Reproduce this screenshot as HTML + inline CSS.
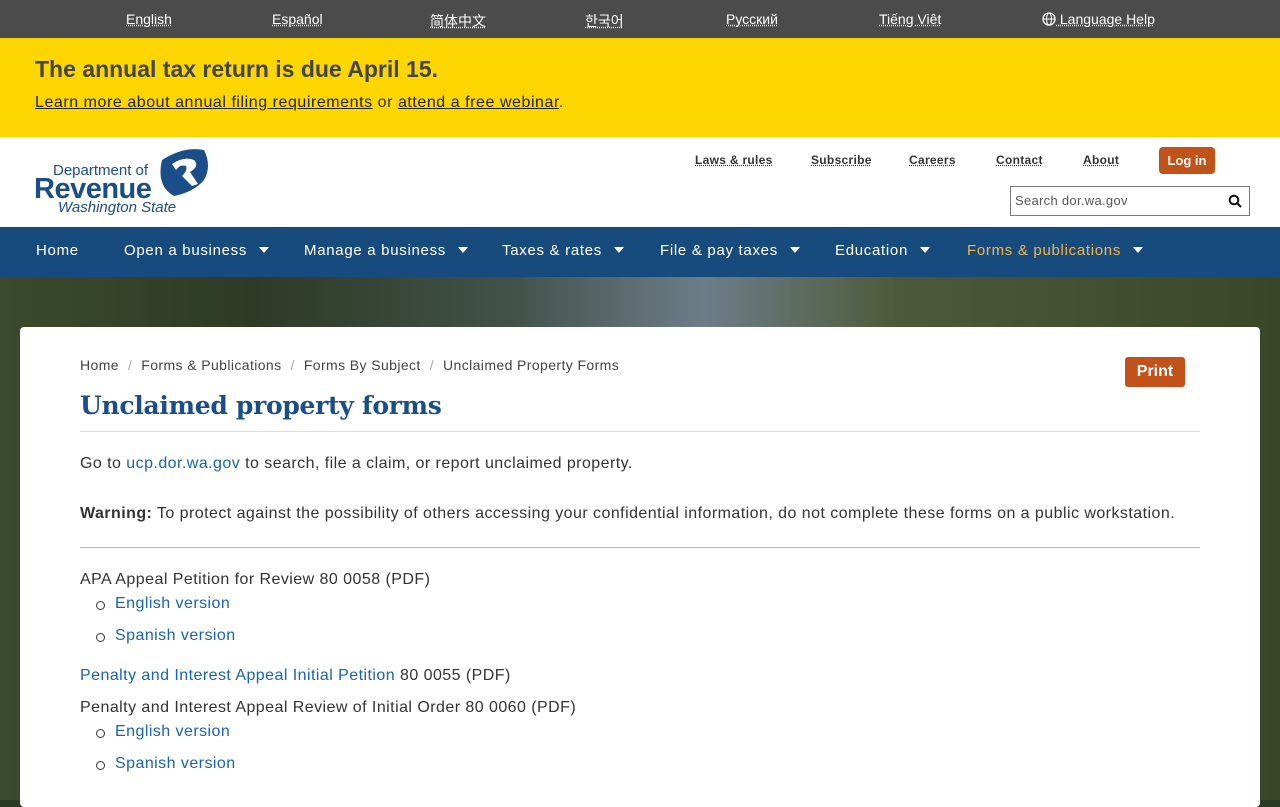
<!DOCTYPE html>
<html><head><meta charset="utf-8"><style>
*{margin:0;padding:0;box-sizing:border-box}
body{width:1280px;height:800px;overflow:hidden;font-family:"Liberation Sans","DejaVu Sans",sans-serif;background:#2d3a22;position:relative}
.lang{height:38px;background:#4b4b4b;color:#fff;font-size:14px;position:relative}
.lang span{position:absolute;top:11px;text-decoration:underline;text-decoration-style:dotted}
.alert{height:99px;background:#fdd600;padding:18px 35px;color:#333}
.alert h2{font-size:23px;font-weight:bold;color:#444}
.alert p{font-size:16px;margin-top:11px;letter-spacing:.55px}
.alert a{color:#222;text-decoration:underline}
.hdr{height:90px;background:#fff;position:relative}
.util{position:absolute;top:16px;font-size:12px;font-weight:bold;color:#333;text-decoration:underline dotted;letter-spacing:.3px}
.nav{height:50px;background:#174b7d;position:relative;color:#fff;font-size:15px}
.nav span{position:absolute;top:15px;letter-spacing:.7px}
.tri{display:inline-block;width:0;height:0;border-left:5px solid transparent;border-right:5px solid transparent;border-top:6px solid #fff;margin-left:12px;vertical-align:2px}
.bg{position:absolute;top:277px;left:0;width:1280px;height:523px;background:linear-gradient(90deg,#3b4a2c 0%,#2e3a24 20%,#42524a 40%,#6d7d88 55%,#4d5a3a 70%,#3a4628 100%)}
.card{position:absolute;left:20px;top:327px;width:1240px;height:480px;background:#fff;border-radius:4px}
.bc{position:absolute;top:30px;left:60px;font-size:14px;color:#444;letter-spacing:.4px}
.bc i{font-style:normal;color:#aaa;margin:0 9px}
.print{position:absolute;left:1105px;top:30px;width:60px;height:30px;background:#c0521a;color:#fff;font-weight:bold;font-size:16px;text-align:center;line-height:29px;border-radius:3px}
h1{position:absolute;top:64px;left:60px;font-family:"DejaVu Serif",serif;font-size:25px;color:#1b4d88;font-weight:bold;letter-spacing:-.3px}
.hr1{position:absolute;top:104px;left:60px;width:1120px;border-top:1px solid #ddd}
.t{position:absolute;left:60px;font-size:16px;color:#333;letter-spacing:.45px}
.t a,.li a{color:#1a63b0;text-decoration:none}
.hr2{position:absolute;top:220px;left:60px;width:1120px;border-top:1px solid #e0c040}
.li{position:absolute;left:95px;font-size:16px;letter-spacing:.45px}
.li:before{content:"";position:absolute;left:-19px;top:6px;width:7px;height:7px;border:1px solid #333;border-radius:50%}
</style></head><body>
<div class="lang">
<span style="left:126px">English</span><span style="left:272px">Español</span><span style="left:430px">简体中文</span><span style="left:585px">한국어</span><span style="left:726px">Русский</span><span style="left:879px">Tiếng Việt</span><span style="left:1042px"><svg width="14" height="14" viewBox="0 0 14 14" style="vertical-align:-2px"><circle cx="7" cy="7" r="6" fill="none" stroke="#fff" stroke-width="1.3"/><ellipse cx="7" cy="7" rx="2.5" ry="6" fill="none" stroke="#fff" stroke-width="1"/><path d="M1 7h12" stroke="#fff"/></svg> Language Help</span>
</div>
<div class="alert"><h2>The annual tax return is due April 15.</h2><p><a>Learn more about annual filing requirements</a> or <a>attend a free webinar</a>.</p></div>
<div class="hdr">
<div style="position:absolute;left:53px;top:25px;font-size:15px;color:#1b4d88">Department of</div>
<div style="position:absolute;left:34px;top:36px;font-size:29px;font-weight:bold;color:#1b4d88;letter-spacing:-.5px">Revenue</div>
<div style="position:absolute;left:58px;top:62px;font-size:15px;font-style:italic;color:#1b4d88">Washington State</div>
<svg style="position:absolute;left:154px;top:9px" width="58" height="50" viewBox="0 0 58 50"><path d="M8 14 Q30 0 50 4 Q58 20 50 34 Q40 46 20 50 Q2 40 8 14Z" fill="#1b4d88"/><path d="M18 18 Q30 10 40 14 Q46 20 36 26 L44 38 L38 40 L28 30 Q34 24 32 20 Q26 18 22 24 Z" fill="#fff"/></svg>
<span class="util" style="left:695px">Laws &amp; rules</span><span class="util" style="left:811px">Subscribe</span><span class="util" style="left:909px">Careers</span><span class="util" style="left:996px">Contact</span><span class="util" style="left:1083px">About</span>
<div style="position:absolute;left:1159px;top:10px;width:56px;height:27px;background:#c0521a;color:#fff;border-radius:4px;font-size:13px;font-weight:bold;text-align:center;line-height:27px">Log in</div>
<div style="position:absolute;left:1010px;top:49px;width:240px;height:30px;border:1px solid #777;font-size:13px;color:#555;padding:6px 4px;letter-spacing:.3px">Search dor.wa.gov<svg style="position:absolute;right:7px;top:7px" width="14" height="14" viewBox="0 0 14 14"><circle cx="6" cy="6" r="4.3" fill="none" stroke="#111" stroke-width="2"/><path d="M9 9l4 4" stroke="#111" stroke-width="2"/></svg></div>
</div>
<div class="nav">
<span style="left:36px">Home</span><span style="left:124px">Open a business<i class="tri"></i></span><span style="left:304px">Manage a business<i class="tri"></i></span><span style="left:502px">Taxes &amp; rates<i class="tri"></i></span><span style="left:660px">File &amp; pay taxes<i class="tri"></i></span><span style="left:835px">Education<i class="tri"></i></span><span style="left:967px;color:#f3b64a">Forms &amp; publications<i class="tri"></i></span>
</div>
<div class="bg"></div>
<div class="card">
<div class="bc">Home<i>/</i>Forms &amp; Publications<i>/</i>Forms By Subject<i>/</i>Unclaimed Property Forms</div>
<div class="print">Print</div>
<h1>Unclaimed property forms</h1>
<div class="hr1"></div>
<div class="t" style="top:128px">Go to <a>ucp.dor.wa.gov</a> to search, file a claim, or report unclaimed property.</div>
<div class="t" style="top:178px"><b>Warning:</b> To protect against the possibility of others accessing your confidential information, do not complete these forms on a public workstation.</div>
<div class="hr2"></div>
<div class="t" style="top:244px">APA Appeal Petition for Review 80 0058 (PDF)</div>
<div class="li" style="top:268px"><a>English version</a></div>
<div class="li" style="top:300px"><a>Spanish version</a></div>
<div class="t" style="top:340px"><a>Penalty and Interest Appeal Initial Petition</a> 80 0055 (PDF)</div>
<div class="t" style="top:372px">Penalty and Interest Appeal Review of Initial Order 80 0060 (PDF)</div>
<div class="li" style="top:396px"><a>English version</a></div>
<div class="li" style="top:428px"><a>Spanish version</a></div>
</div>
</body></html>
